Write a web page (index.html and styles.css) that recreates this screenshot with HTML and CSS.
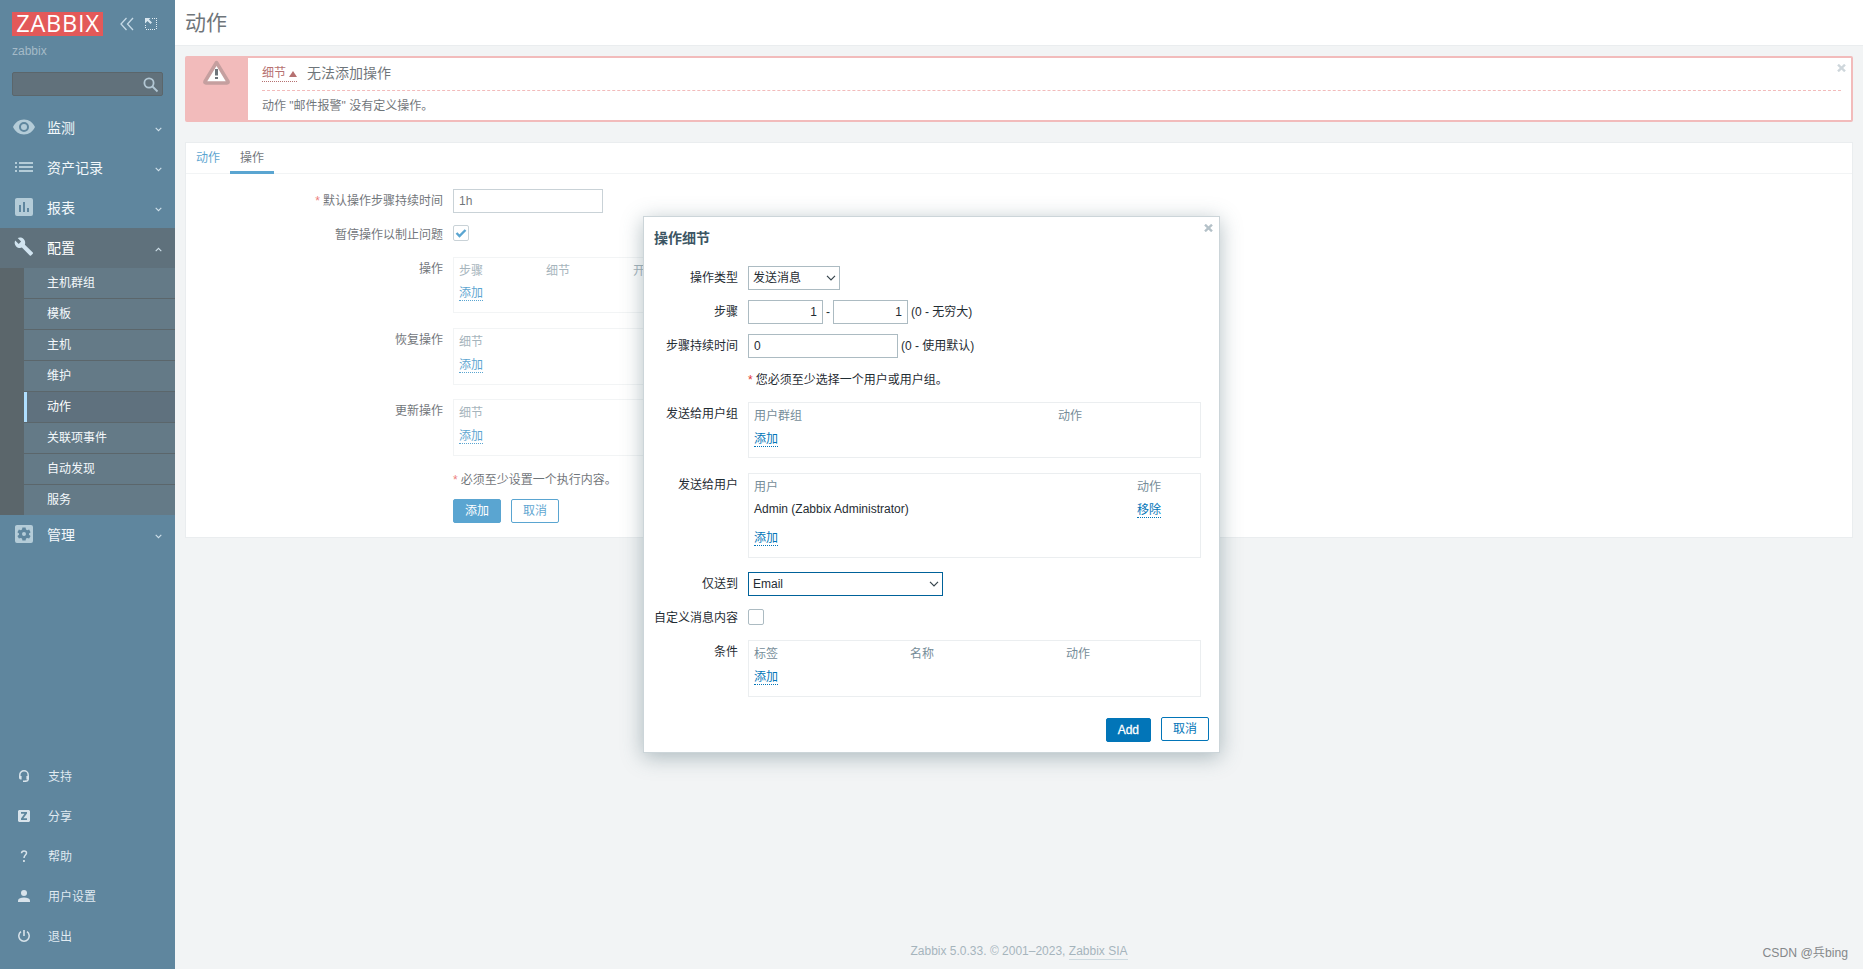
FILE: index.html
```html
<!DOCTYPE html>
<html lang="zh-CN">
<head>
  <meta charset="UTF-8">
  <title>动作</title>
  <link rel="stylesheet" href="styles.css">
</head>
<body>
  <aside class="sidebar">
    <div class="sidebar-header">
      <div class="logo">ZABBIX</div>
      <svg class="icon-compact" width="14" height="14" viewBox="0 0 14 14"><path d="M6.5 1 1 7l5.500 6M13 1 7.500 7 13 13"/></svg>
      <svg class="icon-hide" width="12" height="12" viewBox="0 0 12 12"><path class="dots" d="M7 .5h5M11.500 2v10M10 11.500H0M.5 10V6"/><path class="arrow" d="M0 0h5.500L4 1.500l3 3L5.500 6l-3-3L0 5.500z"/></svg>
    </div>
    <div class="server-name">zabbix</div>
    <div class="search">
      <svg width="16" height="16" viewBox="0 0 16 16"><circle cx="6" cy="6" r="4.600"/><path d="M9.500 9.500l5 5"/></svg>
    </div>
    <ul class="menu">
      <li class="menu-item">
        <svg class="menu-icon" width="22" height="22" viewBox="0 0 22 22"><path fill-rule="evenodd" d="M11 3.500C6 3.500 2 6.500 0 11c2 4.500 6 7.500 11 7.500s9-3 11-7.500c-2-4.500-6-7.500-11-7.500zM11 16a5 5 0 1 1 0-10 5 5 0 0 1 0 10zm0-2a3 3 0 1 0 0-6 3 3 0 0 0 0 6z"/></svg>
        <span>监测</span>
        <svg class="chevron" width="7" height="5" viewBox="0 0 7 5"><path d="M.7.8l2.800 2.800L6.300.8"/></svg>
      </li>
      <li class="menu-item">
        <svg class="menu-icon" width="22" height="22" viewBox="0 0 22 22"><path d="M2 6h2v2H2zM6 6h14v2H6zM2 10h2v2H2zM6 10h14v2H6zM2 14h2v2H2zM6 14h14v2H6z"/></svg>
        <span>资产记录</span>
        <svg class="chevron" width="7" height="5" viewBox="0 0 7 5"><path d="M.7.8l2.800 2.800L6.300.8"/></svg>
      </li>
      <li class="menu-item">
        <svg class="menu-icon" width="22" height="22" viewBox="0 0 22 22"><path fill-rule="evenodd" d="M4 2h14a2 2 0 0 1 2 2v14a2 2 0 0 1-2 2H4a2 2 0 0 1-2-2V4c0-1.100.9-2 2-2zM6 9v7h2V9zM10 6v10h2V6zM14 12v4h2v-4z"/></svg>
        <span>报表</span>
        <svg class="chevron" width="7" height="5" viewBox="0 0 7 5"><path d="M.7.8l2.800 2.800L6.300.8"/></svg>
      </li>
      <li class="menu-item open">
        <svg class="menu-icon" width="22" height="22" viewBox="0 0 22 22"><path d="M19.800 16.600l-7.900-7.800c.7-2 .3-4.200-1.300-5.700-1.600-1.600-4-1.900-5.900-1L8.100 5.500 5.700 7.900 2.200 4.500c-1 2-.6 4.300 1 5.900 1.500 1.500 3.800 2 5.700 1.200l7.900 7.900c.3.400.9.400 1.200 0l1.800-1.800c.4-.3.400-.8 0-1.100z"/></svg>
        <span>配置</span>
        <svg class="chevron" width="7" height="5" viewBox="0 0 7 5"><path d="M.7 4.200l2.800-2.800 2.800 2.800"/></svg>
      </li>
    </ul>
    <ul class="submenu">
      <li>主机群组</li>
      <li>模板</li>
      <li>主机</li>
      <li>维护</li>
      <li class="selected">动作</li>
      <li>关联项事件</li>
      <li>自动发现</li>
      <li>服务</li>
    </ul>
    <div class="menu-item">
      <svg class="menu-icon" width="22" height="22" viewBox="0 0 22 22"><path fill-rule="evenodd" d="M4 2h14a2 2 0 0 1 2 2v14a2 2 0 0 1-2 2H4a2 2 0 0 1-2-2V4c0-1.100.9-2 2-2zM9.400 4.500l-.4 2-1.200.7-1.900-.7-1.500 2.700 1.600 1.200v1.300l-1.600 1.200 1.500 2.700 1.900-.7 1.200.7.4 2h3.200l.4-2 1.200-.7 1.900.7 1.500-2.700-1.600-1.200v-1.300l1.600-1.200-1.500-2.700-1.900.7-1.200-.7-.4-2zM11 13a2 2 0 1 1 0-4 2 2 0 0 1 0 4z"/></svg>
      <span>管理</span>
      <svg class="chevron" width="7" height="5" viewBox="0 0 7 5"><path d="M.7.8l2.800 2.800L6.300.8"/></svg>
    </div>
    <ul class="user-menu">
      <li><svg width="12" height="12" viewBox="0 0 12 12"><path class="line" d="M1.800 7V5a4.200 4.200 0 0 1 8.400 0v4.500Q10 11.300 7 11.300"/><path d="M1 6h2.600v3.500H2.500Q1 9.300 1 7.500zM8.400 6H11v2q-.2 1.500-1.500 1.500H8.400zM5 10.500h2.500V12H5z"/></svg><span>支持</span></li>
      <li><svg width="12" height="12" viewBox="0 0 12 12"><path fill-rule="evenodd" d="M1 0h10l1 1v10l-1 1H1l-1-1V1zM3 2v1.700h3.500L3 8.600V10h6V8.300H5.400L9 3.500V2z"/></svg><span>分享</span></li>
      <li><svg width="12" height="12" viewBox="0 0 12 12"><path class="line" d="M3.500 3.200C3.600 1.600 4.600.9 6 .9s2.500.8 2.500 2.100C8.500 5 6 5.200 6 8"/><path d="M5.100 10h1.700v2H5.100z"/></svg><span>帮助</span></li>
      <li><svg width="12" height="12" viewBox="0 0 12 12"><circle cx="6" cy="3" r="3"/><path d="M0 12v-1.500C.3 8.500 3 7.600 6 7.600s5.700.9 6 2.900V12z"/></svg><span>用户设置</span></li>
      <li><svg width="12" height="12" viewBox="0 0 12 12"><path class="line" d="M3 1.700a5.200 5.200 0 1 0 6 0"/><path d="M5.200 0h1.600v6H5.200z"/></svg><span>退出</span></li>
    </ul>
  </aside>

  <main class="main">
    <header class="page-header">
      <h1>动作</h1>
    </header>

    <div class="message">
      <div class="message-icon">
        <svg width="27" height="25" viewBox="0 0 27 25"><path class="triangle" d="M13.500 2.500 2 21.500Q1.500 23 3 23h21q1.500 0 1-1.500z"/><path class="mark" d="M12 9h3v6.500h-3zM12 17h3v2h-3z"/></svg>
      </div>
      <div class="message-body">
        <div class="message-title">
          <a class="details-link">细节<i class="arrow-up"></i></a>
          <span>无法添加操作</span>
        </div>
        <div class="message-details">动作 "邮件报警" 没有定义操作。</div>
      </div>
      <svg class="message-close" width="9" height="8" viewBox="0 0 9 8"><path d="M1 .7l7 6.600M8 .7L1 7.300"/></svg>
    </div>

    <section class="panel">
      <nav class="tabs">
        <a class="tab">动作</a>
        <a class="tab active">操作</a>
      </nav>
      <div class="form">
        <div class="row">
          <label class="required">默认操作步骤持续时间</label>
          <div class="input medium">1h</div>
        </div>
        <div class="row checkbox-row">
          <label>暂停操作以制止问题</label>
          <div class="checkbox"><svg width="14" height="14" viewBox="0 0 14 14"><path d="M2.500 7l3 3 6-6"/></svg></div>
        </div>
        <div class="row">
          <label>操作</label>
          <div class="table-box short">
            <div class="table-head wide-cols"><span>步骤</span><span>细节</span><span>开始于</span></div>
            <a class="link">添加</a>
          </div>
        </div>
        <div class="row">
          <label>恢复操作</label>
          <div class="table-box">
            <div class="table-head"><span>细节</span></div>
            <a class="link">添加</a>
          </div>
        </div>
        <div class="row">
          <label>更新操作</label>
          <div class="table-box">
            <div class="table-head"><span>细节</span></div>
            <a class="link">添加</a>
          </div>
        </div>
        <div class="row form-hint">
          <label></label>
          <div class="hint required">必须至少设置一个执行内容。</div>
        </div>
        <div class="row">
          <label></label>
          <div class="buttons"><button class="btn">添加</button><button class="btn alt">取消</button></div>
        </div>
      </div>
    </section>

    <footer>Zabbix 5.0.33. © 2001–2023, <a>Zabbix SIA</a></footer>
  </main>

  <div class="overlay-bg"></div>

  <div class="dialog">
    <svg class="dialog-close" width="9" height="8" viewBox="0 0 9 8"><path d="M1 .7l7 6.600M8 .7L1 7.300"/></svg>
    <h4>操作细节</h4>
    <div class="dialog-form">
      <div class="row">
        <label>操作类型</label>
        <div class="select">发送消息<svg width="10" height="6" viewBox="0 0 10 6"><path d="M1 .8l4 4 4-4"/></svg></div>
      </div>
      <div class="row">
        <label>步骤</label>
        <div class="input number">1</div><span class="dash">-</span><div class="input number">1</div><span class="note">(0 - 无穷大)</span>
      </div>
      <div class="row">
        <label>步骤持续时间</label>
        <div class="input medium">0</div><span class="note">(0 - 使用默认)</span>
      </div>
      <div class="row">
        <label></label>
        <div class="hint required">您必须至少选择一个用户或用户组。</div>
      </div>
      <div class="row">
        <label>发送给用户组</label>
        <div class="table-box short groups">
          <div class="table-head group-cols"><span>用户群组</span><span>动作</span></div>
          <a class="link">添加</a>
        </div>
      </div>
      <div class="row">
        <label>发送给用户</label>
        <div class="table-box users">
          <div class="table-head user-cols"><span>用户</span><span>动作</span></div>
          <div class="user-cols user-row"><span>Admin (Zabbix Administrator)</span><a class="link">移除</a></div>
          <a class="link">添加</a>
        </div>
      </div>
      <div class="row">
        <label>仅送到</label>
        <div class="select media focused">Email<svg width="10" height="6" viewBox="0 0 10 6"><path d="M1 .8l4 4 4-4"/></svg></div>
      </div>
      <div class="row checkbox-row">
        <label>自定义消息内容</label>
        <div class="checkbox"></div>
      </div>
      <div class="row">
        <label>条件</label>
        <div class="table-box">
          <div class="table-head condition-cols"><span>标签</span><span>名称</span><span>动作</span></div>
          <a class="link">添加</a>
        </div>
      </div>
    </div>
    <div class="dialog-footer"><button class="btn add">Add</button><button class="btn alt">取消</button></div>
  </div>

  <div class="watermark">CSDN @兵bing</div>
</body>
</html>
```

FILE: styles.css
```css
* {
  box-sizing: border-box;
}
body {
  margin: 0;
  height: 969px;
  display: flex;
  position: relative;
  overflow: hidden;
  background: #ebeef0;
  color: #1f2c33;
  font-family: "Liberation Sans", Arial, "Noto Sans CJK SC", sans-serif;
  font-size: 12px;
  line-height: 14px;
}
ul {
  list-style: none;
  margin: 0;
  padding: 0;
}
svg {
  display: block;
  flex: none;
}

/* sidebar */
.sidebar {
  width: 175px;
  flex: none;
  display: flex;
  flex-direction: column;
  background: #0a466a;
  color: #fff;
}
.sidebar-header {
  display: flex;
  align-items: center;
  height: 24px;
  margin: 12px 12px 0;
}
.logo {
  width: 91px;
  height: 24px;
  background: #d40000;
  font-family: "Open Sans", sans-serif;
  font-size: 23.5px;
  line-height: 23px;
  letter-spacing: 0.8px;
  text-indent: 1px;
  text-align: center;
}
.icon-compact {
  margin-left: 17px;
  fill: none;
  stroke: #a7c6da;
  stroke-width: 1.3;
}
.icon-hide {
  margin-left: 11px;
}
.icon-hide .dots {
  fill: none;
  stroke: #d5e5ee;
  stroke-dasharray: 1 1;
}
.icon-hide .arrow {
  fill: #c3d9e6;
}
.server-name {
  margin: 7px 12px 0;
  height: 16px;
  line-height: 16px;
  color: #7596ab;
}
.search {
  display: flex;
  justify-content: flex-end;
  align-items: center;
  height: 24px;
  margin: 13px 12px 12px;
  padding-right: 3px;
  background: #0d2635;
  border: 1px solid #04151d;
  border-radius: 2px;
}
.search svg {
  margin-top: 1px;
  fill: none;
  stroke: #89a9bd;
  stroke-width: 1.8;
}
.menu-item {
  display: flex;
  align-items: center;
  height: 40px;
  padding: 0 13px;
  font-size: 14px;
  color: #ecf4f9;
}
.menu-item span {
  flex: 1;
  margin-left: 12px;
}
.menu-item.open {
  background: #0a2636;
  color: #fff;
}
.menu-icon {
  margin-top: -2px;
  fill: #8db1c4;
}
.open .menu-icon {
  fill: #b9d6e8;
}
.chevron {
  fill: none;
  stroke: #b5cfdf;
  stroke-width: 1.1;
  margin-top: 2px;
}
.submenu {
  padding-left: 24px;
  background: #04151d;
}
.submenu li {
  height: 30px;
  margin-bottom: 1px;
  padding-left: 23px;
  line-height: 31px;
  background: #113448;
  color: #eef5f9;
}
.submenu li:last-child {
  margin-bottom: 0;
}
.submenu li.selected {
  padding-left: 20px;
  border-left: 3px solid #86ceff;
  background: #0a263a;
  color: #fff;
}
.user-menu {
  margin-top: auto;
  padding-bottom: 12px;
}
.user-menu li {
  display: flex;
  align-items: center;
  height: 40px;
  padding-left: 18px;
  color: #cfdfe9;
}
.user-menu svg {
  margin: -2px 18px 0 0;
  fill: #c3d5e0;
}
.user-menu .line {
  fill: none;
  stroke: #c3d5e0;
  stroke-width: 1.5;
}

/* page */
.main {
  flex: 1;
  display: flex;
  flex-direction: column;
}
.page-header {
  height: 46px;
  padding: 0 10px;
  background: #fff;
  border-bottom: 1px solid #dfe4e7;
}
h1 {
  margin: 0;
  font-size: 21px;
  font-weight: normal;
  line-height: 45px;
}
.message {
  display: flex;
  position: relative;
  height: 66px;
  margin: 10px 10px 20px;
  background: #fff;
  border: 2px solid #eb9797;
  border-radius: 2px;
}
.message-icon {
  width: 61px;
  padding: 2px 0 0 16px;
  background: #eb9797;
}
.triangle {
  fill: #fff;
  stroke: #a66c6c;
  stroke-width: 3.5;
  stroke-linejoin: round;
}
.mark {
  fill: #1f2c33;
}
.message-body {
  flex: 1;
  padding: 0 10px 0 14px;
}
.message-title {
  display: flex;
  align-items: center;
  height: 33px;
  padding-bottom: 3px;
  border-bottom: 1px dashed #eb9797;
  font-size: 14px;
}
.details-link {
  margin-top: 1px;
  margin-right: 10px;
  border-bottom: 1px dotted #902525;
  color: #902525;
  font-size: 12px;
  line-height: 16px;
}
.arrow-up {
  display: inline-block;
  margin-left: 3px;
  border: 4px solid transparent;
  border-top: none;
  border-bottom: 6px solid #902525;
}
.message-details {
  margin-top: 8px;
}
.message-close {
  position: absolute;
  top: 6px;
  right: 5px;
}
.message-close path,
.dialog-close path {
  fill: none;
  stroke: #b4c1c8;
  stroke-width: 2.4;
}
.panel {
  height: 396px;
  margin: 0 10px;
  background: #fff;
  border: 1px solid #dfe4e7;
}
.tabs {
  display: flex;
  height: 31px;
  border-bottom: 1px solid #ebeef0;
}
.tab {
  width: 44px;
  height: 31px;
  line-height: 31px;
  text-align: center;
  color: #0275b8;
}
.tab.active {
  color: #1f2c33;
  border-bottom: 3px solid #0275b8;
}

/* forms */
.row {
  display: flex;
}
.row label {
  flex: none;
  margin-right: 10px;
  line-height: 24px;
  text-align: right;
}
.form {
  padding-top: 15px;
}
.form label {
  width: 257px;
}
.form .row,
.dialog-form .row {
  margin-bottom: 10px;
}
.required::before {
  content: "*";
  margin-right: 3px;
  color: #e33734;
}
.input,
.select {
  height: 24px;
  padding: 0 5px;
  background: #fff;
  border: 1px solid #acbbc2;
  line-height: 22px;
}
.medium {
  width: 150px;
}
.number {
  width: 75px;
  text-align: right;
}
.dash {
  width: 10px;
  line-height: 24px;
  text-align: center;
}
.note {
  margin-left: 3px;
  line-height: 24px;
}
.checkbox {
  width: 16px;
  height: 16px;
  margin-top: 2px;
  background: #fff;
  border: 1px solid #acbbc2;
  border-radius: 2px;
}
.checkbox path {
  fill: none;
  stroke: #0275b8;
  stroke-width: 2.4;
}
.form .checkbox-row {
  height: 24px;
}
.table-box {
  width: 453px;
  height: 57px;
  margin-bottom: 4px;
  padding: 4px 5px 0;
  border: 1px solid #ebeef0;
}
.table-box.short {
  height: 56px;
}
.form .table-box {
  width: 600px;
}
.form .short .table-head {
  margin-bottom: 5px;
}
.form .short {
  margin-bottom: 5px;
}
.table-head {
  margin-bottom: 6px;
  line-height: 18px;
  color: #768d99;
}
.wide-cols {
  display: grid;
  grid-template-columns: 87px 87px 87px;
}
.link {
  display: inline-block;
  height: 16px;
  line-height: 17px;
  border-bottom: 1px dotted #0275b8;
  color: #0275b8;
  vertical-align: top;
}
.hint {
  line-height: 24px;
}
.form .form-hint {
  margin-top: -2px;
}
.buttons {
  display: flex;
  gap: 10px;
}
.btn {
  height: 24px;
  padding: 0 11px;
  background: #0275b8;
  border: 1px solid #0275b8;
  border-radius: 2px;
  color: #fff;
  font: inherit;
  line-height: 22px;
}
.btn.alt {
  background: #fff;
  color: #0275b8;
}
.form .buttons {
  margin-top: -3px;
}
footer {
  margin-top: auto;
  padding-bottom: 9px;
  text-align: center;
  color: #768d99;
  line-height: 15px;
}
footer a {
  display: inline-block;
  border-bottom: 1px solid #b4c6cf;
}

/* modal */
.overlay-bg {
  position: absolute;
  inset: 0;
  background: rgba(255, 255, 255, 0.35);
}
.dialog {
  position: absolute;
  left: 643px;
  top: 216px;
  width: 577px;
  height: 537px;
  padding: 0 10px;
  background: #fff;
  border: 1px solid #ccd5d9;
  box-shadow: 0 4px 20px rgba(64, 96, 106, 0.4);
}
.dialog-close {
  position: absolute;
  top: 7px;
  right: 6px;
}
.dialog h4 {
  margin: 0;
  padding-top: 10px;
  font-size: 14px;
  line-height: 22px;
  color: #3c5563;
}
.dialog-form {
  padding-top: 17px;
}
.dialog-form label {
  width: 84px;
}
.select {
  display: flex;
  align-items: center;
  justify-content: space-between;
  width: 92px;
  padding: 0 3px 0 4px;
}
.select svg {
  fill: none;
  stroke: #36444c;
  stroke-width: 1.2;
}
.media {
  width: 195px;
}
.focused {
  border-color: #00629a;
}
.dialog-form .groups {
  margin-bottom: 5px;
}
.group-cols {
  display: grid;
  grid-template-columns: 304px 1fr;
}
.user-cols {
  display: grid;
  grid-template-columns: 383px 1fr;
}
.condition-cols {
  display: grid;
  grid-template-columns: 156px 156px 1fr;
}
.table-box.users {
  height: 85px;
}
.user-row {
  height: 28px;
  justify-items: start;
}
.dialog-form .checkbox-row {
  height: 24px;
}
.dialog-form .checkbox {
  margin-top: 3px;
}
.dialog-footer {
  display: flex;
  justify-content: flex-end;
  gap: 10px;
  margin-top: 16px;
}
.add {
  margin-top: 1px;
  -webkit-text-stroke: 0.3px #fff;
}
.watermark {
  position: absolute;
  right: 15px;
  bottom: 8px;
  color: #85888a;
  font-size: 12.2px;
  line-height: 16px;
}
```
